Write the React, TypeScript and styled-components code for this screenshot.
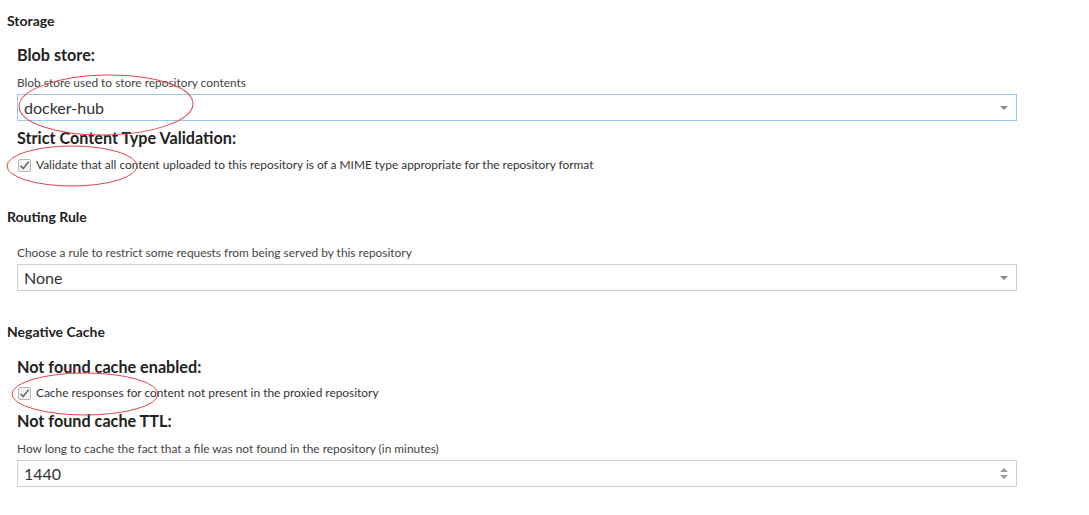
import React from "react";
import styled, { createGlobalStyle } from "styled-components";

const Global = createGlobalStyle`
  html, body { margin: 0; padding: 0; background: #fff; }
  body { font-family: "Lato", "Liberation Sans", sans-serif; color: #333; }
`;

const Page = styled.div`
  position: relative;
  width: 1089px;
  height: 515px;
  overflow: hidden;
  padding: 13px 0 0 7px;
  box-sizing: border-box;
`;

const SectionTitle = styled.div<{ $mt?: number }>`
  font-size: 14px;
  font-weight: 700;
  line-height: 16px;
  color: #222;
  margin-top: ${(p) => p.$mt ?? 0}px;
`;

const Field = styled.div`
  padding-left: 10px;
  display: flex;
  flex-direction: column;
`;

const FieldLabel = styled.div<{ $mt?: number }>`
  font-size: 16.2px;
  font-weight: 700;
  line-height: 20px;
  color: #222;
  margin-top: ${(p) => p.$mt ?? 0}px;
`;

const Help = styled.div<{ $mt?: number }>`
  font-size: 11.9px;
  line-height: 14px;
  color: #444;
  margin-top: ${(p) => p.$mt ?? 0}px;
`;

const Box = styled.div<{ $focus?: boolean }>`
  margin-top: 4px;
  width: 1000px;
  height: 27px;
  box-sizing: border-box;
  border: 1px solid ${(p) => (p.$focus ? "#97c8ee" : "#cfcfcf")};
  display: flex;
  align-items: center;
  justify-content: space-between;
  padding: 0 8px 0 6px;
  font-size: 16px;
  color: #333;
`;

const ArrowDown = styled.span`
  width: 0;
  height: 0;
  border-left: 4px solid transparent;
  border-right: 4px solid transparent;
  border-top: 4px solid #8a8a8a;
  margin-top: 1px;
`;

const Spinner = styled.span`
  display: flex;
  flex-direction: column;
  gap: 3px;
  &::before, &::after {
    content: "";
    width: 0;
    height: 0;
    border-left: 4.5px solid transparent;
    border-right: 4.5px solid transparent;
  }
  &::before { border-bottom: 4.5px solid #9a9a9a; }
  &::after { border-top: 4.5px solid #9a9a9a; }
`;

const CheckRow = styled.div<{ $mt?: number }>`
  display: flex;
  align-items: center;
  gap: 5px;
  margin-top: ${(p) => p.$mt ?? 0}px;
  font-size: 11.9px;
  line-height: 14px;
  color: #333;
`;

const CheckBox = styled.span`
  width: 13px;
  height: 13px;
  box-sizing: border-box;
  border: 1px solid #b5b5b5;
  border-radius: 2px;
  background: #f4f4f4;
  display: flex;
  align-items: center;
  justify-content: center;
  margin-left: 1px;
`;

const Overlay = styled.svg`
  position: absolute;
  left: 0;
  top: 0;
  pointer-events: none;
`;

const Check = () => (
  <CheckBox>
    <svg width="11" height="11" viewBox="0 0 11 11">
      <path d="M1.5 5.8 L4.2 8.5 L9.6 1.8" fill="none" stroke="#6b6b6b" strokeWidth="1.6" />
    </svg>
  </CheckBox>
);

export default function App() {
  return (
    <Page>
      <Global />
      <SectionTitle>Storage</SectionTitle>
      <Field>
        <FieldLabel $mt={16}>Blob store:</FieldLabel>
        <Help $mt={11}>Blob store used to store repository contents</Help>
        <Box $focus>
          <span>docker-hub</span>
          <ArrowDown />
        </Box>
        <FieldLabel $mt={7}>Strict Content Type Validation:</FieldLabel>
        <CheckRow $mt={10}>
          <Check />
          <span>Validate that all content uploaded to this repository is of a MIME type appropriate for the repository format</span>
        </CheckRow>
      </Field>

      <SectionTitle $mt={37}>Routing Rule</SectionTitle>
      <Field>
        <Help $mt={21}>Choose a rule to restrict some requests from being served by this repository</Help>
        <Box>
          <span>None</span>
          <ArrowDown />
        </Box>
      </Field>

      <SectionTitle $mt={33}>Negative Cache</SectionTitle>
      <Field>
        <FieldLabel $mt={17}>Not found cache enabled:</FieldLabel>
        <CheckRow $mt={9}>
          <Check />
          <span>Cache responses for content not present in the proxied repository</span>
        </CheckRow>
        <FieldLabel $mt={11}>Not found cache TTL:</FieldLabel>
        <Help $mt={11}>How long to cache the fact that a file was not found in the repository (in minutes)</Help>
        <Box>
          <span>1440</span>
          <Spinner />
        </Box>
      </Field>

      <Overlay width="1089" height="515">
        <ellipse cx="106" cy="105" rx="87" ry="30" fill="none" stroke="#e8434a" strokeWidth="1" transform="rotate(-1 106 105)" />
        <ellipse cx="72" cy="166" rx="65" ry="20" fill="none" stroke="#e8434a" strokeWidth="1" />
        <ellipse cx="85" cy="394" rx="73" ry="21" fill="none" stroke="#e8434a" strokeWidth="1" />
      </Overlay>
    </Page>
  );
}
